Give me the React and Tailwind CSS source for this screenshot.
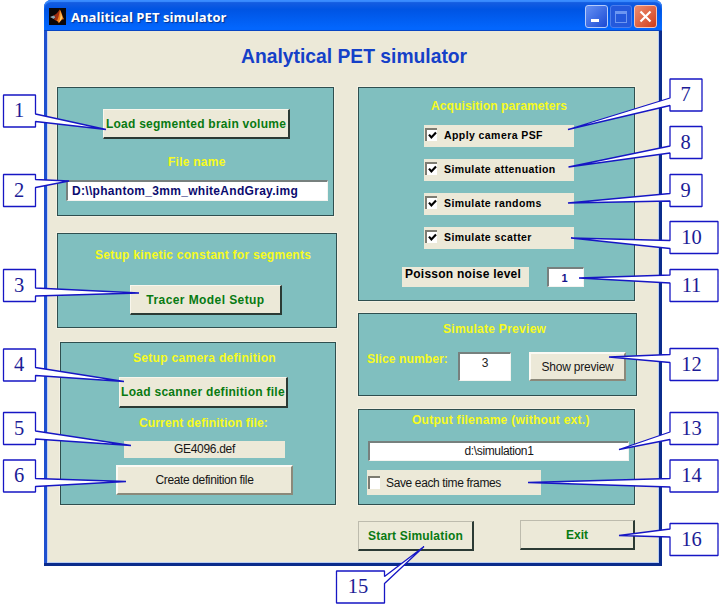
import React from "react";

const callouts = [
  { n: "1", x: 3.5, y: 95, w: 32, a: 114, b: 121.5, tx: 106, ty: 129.5 },
  { n: "2", x: 3.5, y: 174.5, w: 32, a: 179.5, b: 187.5, tx: 69, ty: 181 },
  { n: "3", x: 3.5, y: 269.5, w: 32, a: 288, b: 296, tx: 139, ty: 293 },
  { n: "4", x: 3.5, y: 349, w: 32, a: 367.5, b: 375.5, tx: 124, ty: 381.5 },
  { n: "5", x: 3.5, y: 412.5, w: 32, a: 431, b: 439, tx: 131, ty: 445.5 },
  { n: "6", x: 3.5, y: 460, w: 32, a: 478.5, b: 486.5, tx: 126, ty: 481.5 },
  { n: "7", x: 670, y: 79, w: 32, a: 98, b: 105.5, tx: 568, ty: 129.5 },
  { n: "8", x: 670, y: 126.5, w: 32, a: 146, b: 153, tx: 568.5, ty: 167 },
  { n: "9", x: 670, y: 174.5, w: 32, a: 193.5, b: 201, tx: 568, ty: 203 },
  { n: "10", x: 670, y: 221.5, w: 48, a: 240.5, b: 248.5, tx: 571, ty: 238 },
  { n: "11", x: 670, y: 269.5, w: 48, a: 275, b: 283, tx: 579, ty: 278 },
  { n: "12", x: 670, y: 348.5, w: 48, a: 354.5, b: 362.5, tx: 609, ty: 357 },
  { n: "13", x: 670, y: 412.5, w: 48, a: 432, b: 439.5, tx: 619, ty: 449.5 },
  { n: "14", x: 670, y: 460, w: 48, a: 478.5, b: 487, tx: 528, ty: 482.5 },
  { n: "15", x: 336.5, y: 571, w: 48, a: 576.5, b: 583.5, tx: 424, ty: 546.5 },
  { n: "16", x: 670, y: 523.5, w: 48, a: 529, b: 537, tx: 619, ty: 535.5 },
];

function Callouts() {
  return (
    <svg className="pointer-events-none absolute inset-0" width="721" height="606" viewBox="0 0 721 606">
      {callouts.map((c) => {
        const r = c.x + c.w;
        const bottom = c.y + 32;
        const tailRight = c.tx > r;
        const d = tailRight
          ? `M${c.x} ${c.y}H${r}V${c.a}L${c.tx} ${c.ty}L${r} ${c.b}V${bottom}H${c.x}Z`
          : `M${r} ${c.y}H${c.x}V${c.a}L${c.tx} ${c.ty}L${c.x} ${c.b}V${bottom}H${r}Z`;
        return (
          <g key={c.n}>
            <path d={d} fill="#fff" stroke="#1616c4" strokeWidth="1.3" strokeLinejoin="bevel" />
            <text
              x={c.n.length === 1 ? c.x + 15.5 : c.x + 21.5}
              y={c.y + 22}
              textAnchor="middle"
              fill="#1c1c96"
              fontSize="20.5"
              fontFamily="'Liberation Serif', serif"
            >
              {c.n}
            </text>
          </g>
        );
      })}
    </svg>
  );
}

function Panel({ className, children }) {
  return (
    <section className={`flex flex-col border border-[#2f4f4f] bg-[#80bfbf] outline-1 outline-[#f3f0e2] ${className}`}>
      {children}
    </section>
  );
}

function Label({ className, children }) {
  return <div className={`h-[14px] font-bold leading-[14px] whitespace-nowrap text-[#f7fb1e] ${className}`}>{children}</div>;
}

function BoldButton({ className, edge = "border-t-[#f8f6ec] border-l-[#f8f6ec]", children }) {
  return (
    <button
      className={`flex items-center justify-center border-t border-r-2 border-b-2 border-l border-r-[#2b3a34] border-b-[#2b3a34] bg-[#ece9d8] font-bold whitespace-nowrap text-[#087a12] ${edge} ${className}`}
    >
      {children}
    </button>
  );
}

function PlainButton({ className, children }) {
  return (
    <button
      className={`flex items-center justify-center border-2 border-t-[#fbfaf4] border-r-[#8b897a] border-b-[#8b897a] border-l-[#fbfaf4] bg-[#ece9d8] whitespace-nowrap text-[#161616] ${className}`}
    >
      {children}
    </button>
  );
}

function Field({ className, children }) {
  return (
    <div className={`border-t-2 border-r border-b border-l-2 border-t-[#77807e] border-r-[#f4f4f0] border-b-[#f4f4f0] border-l-[#77807e] bg-white whitespace-nowrap ${className}`}>
      {children}
    </div>
  );
}

function CheckBox({ checked }) {
  return (
    <span className="flex h-[13px] w-[12px] items-center justify-center border-t-2 border-l-2 border-[#7d7c72] bg-white">
      {checked && (
        <svg width="9" height="9" viewBox="0 0 9 9">
          <path d="M1 3.6 3.4 6.4 8 1.6" fill="none" stroke="#000" strokeWidth="2.2" />
        </svg>
      )}
    </span>
  );
}

function CheckRow({ children }) {
  return (
    <div className="flex h-[22px] w-[150px] bg-[#ece9d8] pt-[3px] pl-px">
      <CheckBox checked />
      <span className="ml-[7px] text-[10.5px] leading-[14px] font-bold tracking-[0.42px] whitespace-nowrap text-black">{children}</span>
    </div>
  );
}

function TitleBar() {
  return (
    <header className="flex h-[31px] items-center rounded-t-[7px] bg-linear-to-b from-[#1a5fe0] from-0% via-[#0054e3] via-30% to-[#0366fd] to-90% pr-[5px] pl-[5px] shadow-[inset_0_2px_1px_#3a8cff,inset_0_-1px_0_#0846c4]">
      <svg className="mt-[2px]" width="17" height="17" viewBox="0 0 17 17">
        <rect width="17" height="17" fill="#0b0708" />
        <path d="M1 9 4.5 7.4 7 9 4.6 11Z" fill="#8fa3b0" />
        <path d="M4.5 7.4C7 7 9 4 10.8 1.6L10.6 9 7.4 13 4.6 11 7 9Z" fill="#a02d12" />
        <path d="M10.8 1.6C12.3 3 13.2 8.5 15.2 11.6 13.3 10.6 12 12.5 9.8 15.3 9 13.4 8.3 12.7 7.4 13 10 10.5 10.2 5 10.8 1.6Z" fill="#ee7b1c" />
        <path d="M11.2 2.8C12 6 11.6 11 9.9 14.4 12 12.4 13 10.8 13.2 9.3Z" fill="#ffd36a" />
      </svg>
      <span className="mt-[3px] ml-[5px] font-['Open_Sans',sans-serif] text-[13px] leading-4 font-bold tracking-[0.05px] whitespace-nowrap text-white [text-shadow:1px_1px_1px_#06318e]">
        Analitical PET simulator
      </span>
      <div className="mt-[2px] ml-auto flex gap-[2px]">
        <span className="flex h-[23px] w-[23px] items-end rounded-[3px] border border-[#b5cbfa] bg-linear-to-br from-[#6690f3] to-[#1c48d4] pb-[5px] pl-[5px]">
          <span className="h-[3px] w-[8px] bg-white" />
        </span>
        <span className="flex h-[23px] w-[22px] items-center justify-center rounded-[3px] border border-[#4c7deb] bg-[#2459dc]">
          <span className="h-[12px] w-[12px] border border-t-[3px] border-[#6c96f1]" />
        </span>
        <span className="flex h-[23px] w-[23px] items-center justify-center rounded-[3px] border border-[#f3c3b8] bg-linear-to-br from-[#ee8c6e] to-[#cf3a14]">
          <svg width="13" height="13" viewBox="0 0 13 13">
            <path d="M1.5 1.5 11.5 11.5M11.5 1.5 1.5 11.5" stroke="#fff" strokeWidth="2.2" />
          </svg>
        </span>
      </div>
    </header>
  );
}

export default function App() {
  return (
    <div className="relative h-[606px] w-[721px] overflow-hidden bg-white font-['Liberation_Sans',Arial,sans-serif] text-[12px]">
      <main className="ml-[44px] flex h-[566px] w-[618px] flex-col rounded-t-[8px] bg-[#0b2c8c]">
        <TitleBar />
        <div className="mr-[3px] mb-[3px] flex flex-1 flex-col border-l-[3px] border-[#1f50cf] bg-[#ece9d8] shadow-[inset_1px_0_0_#c5d4f2,inset_-1px_-1px_0_#b9cdf3]">
          <h1 className="mt-[15px] h-[22px] pl-[194px] text-[19.3px] leading-[22px] font-bold whitespace-nowrap text-[#1540c8]">
            Analytical PET simulator
          </h1>
          <div className="mt-[19px] flex">
            <div className="ml-[10px] flex w-[301px] flex-col">
              <Panel className="h-[129px] w-[277px]">
                <BoldButton className="mt-[21px] ml-[45px] h-[30px] w-[187px] tracking-[0.25px]">Load segmented brain volume</BoldButton>
                <Label className="mt-[16px] ml-[110px] tracking-[0.25px]">File name</Label>
                <Field className="mt-[11px] ml-[8px] h-[21px] w-[262px] pl-[4px] leading-[19px] font-bold tracking-[0.3px] text-[#0b0b6e]">
                  D:\\phantom_3mm_whiteAndGray.img
                </Field>
              </Panel>
              <Panel className="mt-[17px] h-[95px] w-[280px]">
                <Label className="mt-[14px] ml-[37px] tracking-[0.27px]">Setup kinetic constant for segments</Label>
                <BoldButton className="mt-[23px] ml-[72px] h-[30px] w-[152px] tracking-[0.42px]">Tracer Model Setup</BoldButton>
              </Panel>
              <Panel className="mt-[14px] ml-[3px] h-[163px] w-[276px]">
                <Label className="mt-[8px] ml-[72px] tracking-[0.3px]">Setup camera definition</Label>
                <BoldButton className="mt-[12px] ml-[58px] h-[31px] w-[169px] tracking-[0.28px]">Load scanner definition file</BoldButton>
                <Label className="mt-[8px] ml-[78px] tracking-[0.15px]">Current definition file:</Label>
                <div className="mt-[11px] ml-[63px] h-[17px] w-[161px] bg-[#ece9d8] text-center leading-[16px] tracking-[-0.3px] text-[#161616]">
                  GE4096.def
                </div>
                <PlainButton className="mt-[7px] ml-[55px] h-[30px] w-[177px] tracking-[-0.37px]">Create definition file</PlainButton>
              </Panel>
            </div>
            <div className="flex w-[280px] flex-col">
              <Panel className="h-[214px] w-[277px]">
                <Label className="mt-[11px] ml-[72px] tracking-[0.12px]">Acquisition parameters</Label>
                <div className="mt-[12px] ml-[65px] flex flex-col gap-[12px]">
                  <CheckRow>Apply camera PSF</CheckRow>
                  <CheckRow>Simulate attenuation</CheckRow>
                  <CheckRow>Simulate randoms</CheckRow>
                  <CheckRow>Simulate scatter</CheckRow>
                </div>
                <div className="mt-[18px] ml-[43px] flex">
                  <div className="h-[20px] w-[127px] bg-[#ece9d8] pl-[3px] leading-[15px] font-bold tracking-[0.25px] text-black">Poisson noise level</div>
                  <Field className="ml-[18px] h-[20px] w-[37px] pr-[3px] text-center text-[11px] leading-[18px] font-bold text-[#14148c]">1</Field>
                </div>
              </Panel>
              <Panel className="mt-[12px] h-[83px] w-[279px]">
                <Label className="mt-[8px] ml-[84px] tracking-[0.28px]">Simulate Preview</Label>
                <div className="mt-[16px] ml-[8px] flex">
                  <Label className="w-[91px] tracking-[0.12px]">Slice number:</Label>
                  <Field className="h-[29px] w-[53px] text-center leading-[19px] text-[#222]">3</Field>
                  <PlainButton className="ml-[18px] h-[29px] w-[97px] tracking-[-0.22px]">Show preview</PlainButton>
                </div>
              </Panel>
              <Panel className="mt-[13px] h-[96px] w-[277px]">
                <Label className="mt-[3px] ml-[53px] tracking-[0.28px]">Output filename (without ext.)</Label>
                <Field className="mt-[14px] ml-[9px] h-[20px] w-[261px] text-center leading-[17px] tracking-[-0.36px] text-[#161616]">
                  d:\simulation1
                </Field>
                <div className="mt-[9px] ml-[8px] flex h-[25px] w-[174px] items-center bg-[#ece9d8] pl-px">
                  <CheckBox />
                  <span className="ml-[6px] tracking-[-0.37px] whitespace-nowrap text-[#161616]">Save each time frames</span>
                </div>
              </Panel>
              <div className="mt-[15px] flex">
                <BoldButton edge="border-t-[#bdbbad] border-l-[#bdbbad]" className="mt-px h-[30px] w-[116px] tracking-[0.18px]">
                  Start Simulation
                </BoldButton>
                <BoldButton edge="border-t-[#bdbbad] border-l-[#bdbbad]" className="ml-[46px] h-[30px] w-[115px]">
                  Exit
                </BoldButton>
              </div>
            </div>
          </div>
        </div>
      </main>
      <Callouts />
    </div>
  );
}
